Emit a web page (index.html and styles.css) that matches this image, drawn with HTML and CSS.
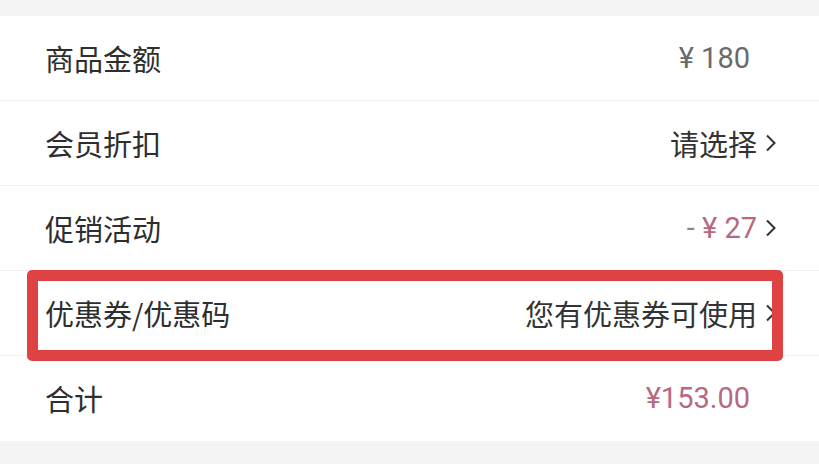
FILE: index.html
```
<!DOCTYPE html>
<html lang="zh">
<head>
<meta charset="utf-8">
<link rel="stylesheet" href="styles.css">
</head>
<body>
<div class="page">
  <div class="list">
    <div class="row">
      <span class="label">商品金额</span>
      <span class="value num gray">¥ 180</span>
      <span class="slot"></span>
    </div>
    <div class="row">
      <span class="label">会员折扣</span>
      <span class="value">请选择</span>
      <span class="arrow"><svg width="19" height="18" viewBox="0 0 19 18"><polyline points="10,1.5 17.5,9 10,16.5" fill="none" stroke="#333" stroke-width="2"/></svg></span>
    </div>
    <div class="row">
      <span class="label">促销活动</span>
      <span class="value num"><span class="minus">- </span><span class="pink">¥ 27</span></span>
      <span class="arrow"><svg width="19" height="18" viewBox="0 0 19 18"><polyline points="10,1.5 17.5,9 10,16.5" fill="none" stroke="#333" stroke-width="2"/></svg></span>
    </div>
    <div class="row hl">
      <span class="label">优惠券/优惠码</span>
      <span class="value">您有优惠券可使用</span>
      <span class="arrow"><svg width="19" height="18" viewBox="0 0 19 18"><polyline points="10,1.5 17.5,9 10,16.5" fill="none" stroke="#333" stroke-width="2"/></svg></span>
      <div class="mark"></div>
    </div>
    <div class="row last">
      <span class="label">合计</span>
      <span class="value num pink">¥153.00</span>
      <span class="slot"></span>
    </div>
  </div>
</div>
</body>
</html>
```
FILE: styles.css
```
html, body {
  margin: 0;
  padding: 0;
}
body {
  width: 819px;
  height: 464px;
  background: #f4f4f4;
  overflow: hidden;
  font-family: "Noto Sans CJK SC", "Noto Sans", sans-serif;
  color: #2e2e2e;
}
.page {
  padding-top: 16px;
}
.list {
  background: #fff;
}
.row {
  position: relative;
  display: flex;
  align-items: center;
  height: 84px;
  padding: 0 43px 0 45px;
  border-bottom: 1px solid #f1f1f1;
}
.row.last {
  border-bottom: none;
  height: 85px;
}
.label {
  font-size: 29px;
  flex: 1;
  line-height: 1;
}
.value {
  font-size: 29px;
  line-height: 1;
  color: #333;
}
.num {
  font-family: Roboto, "Noto Sans", sans-serif;
  font-size: 29px;
}
.gray { color: #6a6a6a; }
.minus { color: #8a8a8a; }
.pink { color: #b8687f; }
.slot {
  width: 26px;
}
.arrow {
  width: 19px;
  height: 18px;
  display: flex;
}
.mark {
  position: absolute;
  left: 27px;
  top: -1px;
  width: 734px;
  height: 69px;
  border: 11px solid #df4242;
  border-radius: 5px;
}
```
